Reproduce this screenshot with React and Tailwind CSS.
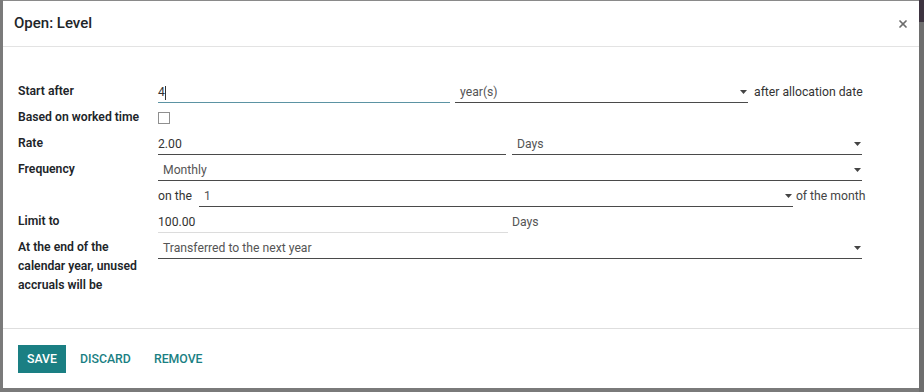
import { X } from 'lucide-react'

function Caret() {
  return (
    <svg width="7" height="4" viewBox="0 0 7 4" className="shrink-0 mb-[6px]">
      <path d="M0 0h7L3.5 4z" fill="#444" />
    </svg>
  )
}

function Field({ value, className = '', muted = false, select = false, light = false }) {
  const border = light ? 'border-[#dcdcdc]' : 'border-[#4a4a4a]'
  return (
    <div className={`h-[26px] flex items-end pb-[2px] leading-[15px] border-b ${border} ${className}`}>
      <span className={`flex-1 truncate ${select ? 'pl-[5px]' : ''} ${muted ? 'text-[#555]' : 'text-[#333]'}`}>{value}</span>
      {select && <Caret />}
      {select && <span className="w-[1px]" />}
    </div>
  )
}

function Row({ label, children }) {
  return (
    <div className="flex min-h-[26px]">
      <div className="w-[140px] shrink-0 pt-[5px] leading-[19px] font-semibold text-[#212529]">{label}</div>
      <div className="flex-1 flex items-start">{children}</div>
    </div>
  )
}

function Text({ children, className = '' }) {
  return (
    <span className={`h-[26px] flex items-end pb-[3px] leading-[15px] whitespace-nowrap shrink-0 ${className}`}>
      {children}
    </span>
  )
}

export default function App() {
  return (
    <div
      className="w-[924px] h-[392px] bg-[#7a7a7a] flex text-[12.2px]"
      style={{ fontFamily: 'Roboto, "Liberation Sans", sans-serif' }}
    >
      <div className="w-[3px] shrink-0" />
      <div className="flex flex-col">
        <div className="h-[1px] bg-[#8a8a8a]" />
        <div className="w-[916px] h-[387px] bg-white flex flex-col">
          {/* Header */}
          <div className="h-[46px] shrink-0 flex items-center justify-between pl-[11px] pr-[10px] border-b border-[#e3e3e3]">
            <span className="text-[15px] font-medium text-[#212529]">Open: Level</span>
            <X className="w-[12px] h-[12px] text-[#6d6d6d]" strokeWidth={3.5} />
          </div>

          {/* Body */}
          <div className="flex-1 pl-[15px] pr-[57px] pt-[30px]">
            <Row label="Start after">
              <div className="flex items-start w-full">
                <div className="w-[292px] h-[26px] flex items-end pb-[2px] leading-[15px] border-b border-[#5b93a3] text-[#333]">
                  4<span className="w-[1px] h-[14px] bg-[#333]" />
                </div>
                <Field value="year(s)" className="ml-[5px] w-[293px]" muted select />
                <Text className="ml-[6px] text-[#333]">after allocation date</Text>
              </div>
            </Row>
            <Row label="Based on worked time">
              <div className="h-[26px] flex items-center pt-[4px]">
                <div className="w-[12px] h-[12px] border border-[#8f8f8f] bg-white" />
              </div>
            </Row>
            <Row label="Rate">
              <Field value="2.00" className="w-[348px]" />
              <Field value="Days" className="ml-[6px] flex-1" muted select />
            </Row>
            <Row label="Frequency">
              <Field value="Monthly" className="flex-1" muted select />
            </Row>
            <Row label="">
              <Text className="text-[#333] mr-[7px]">on the</Text>
              <Field value="1" className="w-[594px]" muted select />
              <Text className="text-[#444] ml-[3px]">of the month</Text>
            </Row>
            <Row label="Limit to">
              <Field value="100.00" className="w-[350px]" light />
              <Text className="text-[#555] ml-[4px]">Days</Text>
            </Row>
            <Row
              label={
                <>
                  At the end of the
                  <br />
                  calendar year, unused
                  <br />
                  accruals will be
                </>
              }
            >
              <Field value="Transferred to the next year" className="flex-1" muted select />
            </Row>
          </div>

          {/* Footer */}
          <div className="h-[60px] shrink-0 border-t border-[#dedede] flex items-start pt-[16px] pl-[15px] text-[12.3px]">
            <button className="h-[28px] px-[9px] bg-[#1a7f83] text-white font-medium uppercase">Save</button>
            <button className="h-[28px] ml-[14px] text-[#1a7f83] font-medium uppercase">Discard</button>
            <button className="h-[28px] ml-[23px] text-[#1a7f83] font-medium uppercase">Remove</button>
          </div>
        </div>
        <div className="flex-1 bg-[#7a7a7a]" />
      </div>
      <div className="flex-1 flex flex-col">
        <div className="h-[22px] bg-[#3d3340]" />
        <div className="flex-1 bg-[#6e6e6e]" />
      </div>
    </div>
  )
}
